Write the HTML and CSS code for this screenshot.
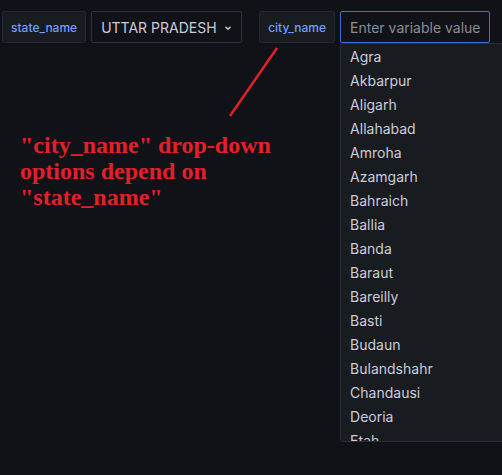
FILE: index.html
```html
<!DOCTYPE html>
<html>
<head>
<meta charset="utf-8">
<link rel="stylesheet" href="styles.css">
</head>
<body>
<div class="bar">
  <div class="var">
    <span class="label">state_name</span>
    <div class="select">
      <span>UTTAR PRADESH</span>
      <svg class="chev" width="10" height="10" viewBox="0 0 10 10"><path d="M2.5 3.8 L5 6.3 L7.5 3.8" fill="none" stroke="#ccccdc" stroke-width="1.4"/></svg>
    </div>
  </div>
  <div class="var city">
    <span class="label">city_name</span>
    <div class="combo">
      <div class="input">Enter variable value</div>
      <ul class="menu">
        <li>Agra</li><li>Akbarpur</li><li>Aligarh</li><li>Allahabad</li><li>Amroha</li><li>Azamgarh</li><li>Bahraich</li><li>Ballia</li><li>Banda</li><li>Baraut</li><li>Bareilly</li><li>Basti</li><li>Budaun</li><li>Bulandshahr</li><li>Chandausi</li><li>Deoria</li><li>Etah</li>
      </ul>
    </div>
  </div>
</div>
<svg class="arrow" width="60" height="80" viewBox="0 0 60 80"><line x1="50" y1="8" x2="3" y2="76" stroke="#e3202a" stroke-width="2.4"/></svg>
<p class="note">"city_name" drop-down<br>options depend on<br>"state_name"</p>
</body>
</html>
```
FILE: styles.css
```css
html, body { margin: 0; padding: 0; }
body {
  background: #111217;
  width: 502px;
  height: 475px;
  overflow: hidden;
  position: relative;
  font-family: Inter, "Noto Sans", sans-serif;
}
.bar {
  display: flex;
  gap: 17px;
  padding: 11px 0 0 2px;
}
.var { display: flex; gap: 5px; align-items: flex-start; }
.label {
  box-sizing: border-box;
  height: 32px;
  padding: 0 8px;
  display: flex;
  align-items: center;
  background: #181b1f;
  border: 1px solid #24272d;
  border-radius: 2px;
  color: #6e9fff;
  font-size: 12px;
  font-weight: 500;
}
.select {
  box-sizing: border-box;
  width: 151px;
  height: 32px;
  display: flex;
  align-items: center;
  gap: 6px;
  padding: 0 8px 0 9px;
  border: 1px solid #2f3238;
  border-radius: 2px;
  color: #ccccdc;
  font-size: 14px;
}
.chev { margin-top: 1px; }
.combo { position: relative; }
.input {
  box-sizing: border-box;
  width: 150px;
  height: 32px;
  display: flex;
  align-items: center;
  padding: 0 9px;
  border: 1px solid #3d71d9;
  border-radius: 2px;
  color: #8b8c96;
  font-size: 14px;
  white-space: nowrap;
}
.menu {
  position: absolute;
  left: 0;
  top: 32px;
  width: 200px;
  height: 399px;
  margin: 0;
  padding: 1px 0 0;
  list-style: none;
  background: #181b1f;
  border: 1px solid #2a2d33;
  border-radius: 3px;
  overflow: hidden;
  box-sizing: border-box;
}
.menu li {
  height: 24px;
  line-height: 24px;
  padding-left: 9px;
  color: #ccccdc;
  font-size: 14px;
}
.arrow {
  position: absolute;
  left: 227px;
  top: 40px;
}
.note {
  margin: 0;
  position: absolute;
  left: 20px;
  top: 132px;
  color: #e3202a;
  font-family: "Liberation Serif", "Times New Roman", serif;
  font-weight: bold;
  font-size: 24px;
  line-height: 26px;
}
```
